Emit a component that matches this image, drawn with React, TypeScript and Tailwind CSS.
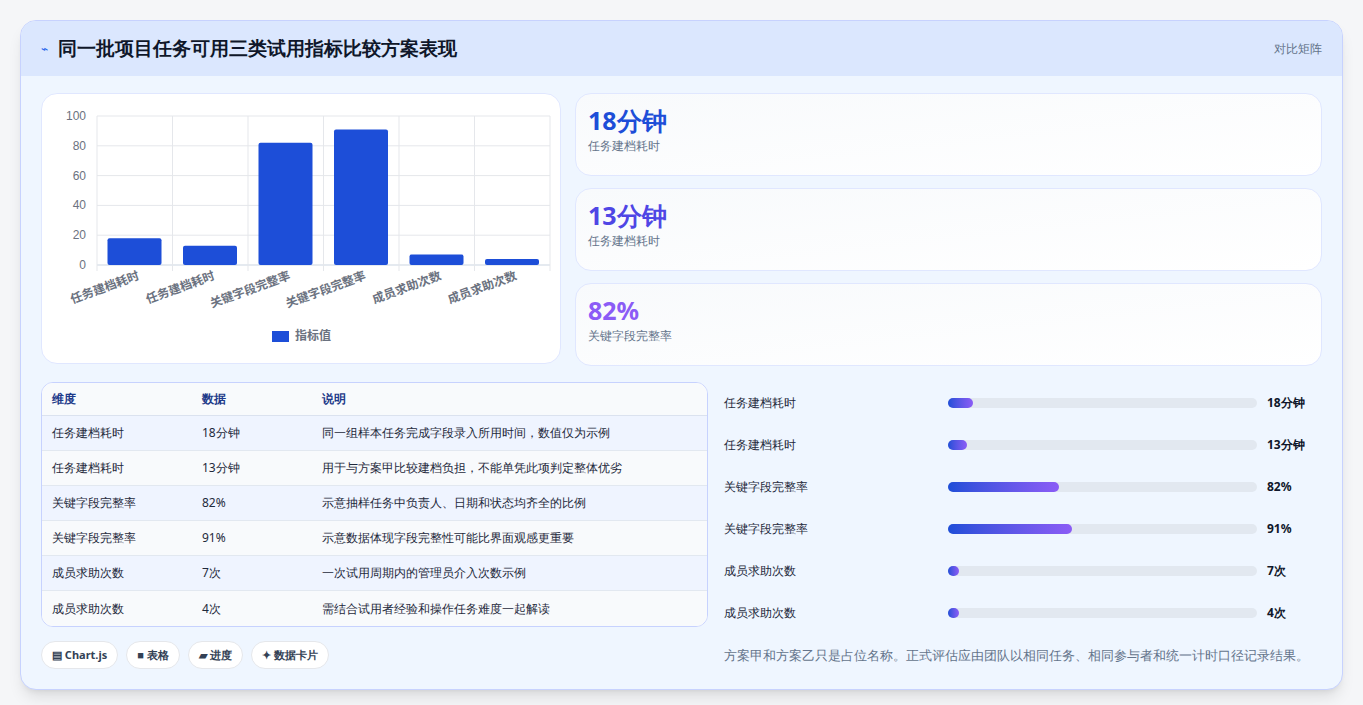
const rows = [
  { k: "任务建档耗时", v: "18分钟", n: 18, d: "同一组样本任务完成字段录入所用时间，数值仅为示例", w: "8%" },
  { k: "任务建档耗时", v: "13分钟", n: 13, d: "用于与方案甲比较建档负担，不能单凭此项判定整体优劣", w: "6%" },
  { k: "关键字段完整率", v: "82%", n: 82, d: "示意抽样任务中负责人、日期和状态均齐全的比例", w: "36%" },
  { k: "关键字段完整率", v: "91%", n: 91, d: "示意数据体现字段完整性可能比界面观感更重要", w: "40%" },
  { k: "成员求助次数", v: "7次", n: 7, d: "一次试用周期内的管理员介入次数示例", w: "3.6%" },
  { k: "成员求助次数", v: "4次", n: 4, d: "需结合试用者经验和操作任务难度一起解读", w: "3.6%" },
];

function Chart() {
  const x0 = 95, x1 = 548, y0 = 264, y1 = 115;
  const cw = (x1 - x0) / 6;
  const yOf = (v: number) => y0 - ((y0 - y1) * v) / 100;
  return (
    <svg width="520" height="270" viewBox="40 93 520 270" className="block">
      {[0, 20, 40, 60, 80, 100].map((t) => (
        <g key={t}>
          <line x1={x0} x2={x1} y1={yOf(t)} y2={yOf(t)} stroke={t === 0 ? "#cbd5e1" : "#e5e7eb"} />
          <text x={x0 - 11} y={yOf(t) + 4} textAnchor="end" fontSize="12" fill="#6b7280" fontFamily="Liberation Sans, sans-serif">{t}</text>
        </g>
      ))}
      {Array.from({ length: 7 }).map((_, i) => (
        <line key={i} x1={x0 + cw * i} x2={x0 + cw * i} y1={y1} y2={y0 + 6} stroke="#e5e7eb" />
      ))}
      {rows.map((r, i) => (
        <g key={i}>
          <rect x={x0 + cw * i + 10.5} y={yOf(r.n)} width={54} height={y0 - yOf(r.n)} rx={2} fill="#1d4ed8" />
          <text
            transform={`translate(${x0 + cw * i + 43},${y0 + 14}) rotate(-20)`}
            textAnchor="end"
            fontSize="12"
            fontWeight="600"
            fill="#6b7280"
            fontFamily="Noto Sans CJK SC, sans-serif"
          >{r.k}</text>
        </g>
      ))}
      <rect x="270" y="330" width="17" height="11" fill="#1d4ed8" />
      <text x="293" y="339" fontSize="12" fill="#6b7280" fontWeight="600" fontFamily="Noto Sans CJK SC, sans-serif">指标值</text>
    </svg>
  );
}

const cards = [
  { v: "18分钟", l: "任务建档耗时", c: "text-[#1d4ed8]" },
  { v: "13分钟", l: "任务建档耗时", c: "text-[#4f46e5]" },
  { v: "82%", l: "关键字段完整率", c: "text-[#8b5cf6]" },
];

export default function App() {
  return (
    <div className="min-h-screen bg-[#f3f4f6] px-5 pt-5 pb-5 font-['Noto_Sans_CJK_SC',sans-serif]" style={{ background: "#f5f6f8" }}>
      <div className="rounded-2xl border border-[#c7d2fe] bg-[#eff6ff] overflow-hidden shadow-lg">
        <div className="h-[55px] bg-[#dbe7fe] flex items-center justify-between px-5">
          <div className="flex items-center gap-2.5">
            <span className="text-[#2563eb] text-xs">⌁</span>
            <h1 className="text-[19px] font-bold text-[#0f172a]">同一批项目任务可用三类试用指标比较方案表现</h1>
          </div>
          <span className="text-xs text-[#64748b]">对比矩阵</span>
        </div>
        <div className="p-5 pt-[17px] flex flex-col gap-4">
          <div className="flex gap-3.5">
            <div className="w-[520px] h-[271px] shrink-0 bg-white rounded-2xl border border-[#e0e7ff] overflow-hidden">
              <Chart />
            </div>
            <div className="flex-1 flex flex-col gap-3">
              {cards.map((c, i) => (
                <div key={i} className="h-[83px] rounded-2xl border border-[#e0e7ff] bg-gradient-to-br from-[#f8fafc] to-white px-3 pt-2.5">
                  <div className={`text-[25px] font-bold leading-[32px] ${c.c}`}>{c.v}</div>
                  <div className="text-xs text-[#64748b] mt-0.5">{c.l}</div>
                </div>
              ))}
            </div>
          </div>
          <div className="flex gap-3">
            <div className="w-[667px] shrink-0">
              <div className="rounded-xl border border-[#c7d2fe] bg-white overflow-hidden text-xs">
                <div className="flex h-[33px] items-center bg-[#f8fafc] border-b border-[#dbe2ef] font-bold text-[#1e3a8a]">
                  <div className="w-[160px] pl-2.5">维度</div>
                  <div className="w-[120px]">数据</div>
                  <div>说明</div>
                </div>
                {rows.map((r, i) => (
                  <div key={i} className={`flex h-[35px] items-center text-[#1e293b] ${i < 5 ? "border-b border-[#e2e8f0]" : ""} ${i % 2 === 0 ? "bg-[#eff4ff]" : "bg-[#f8fafc]"}`}>
                    <div className="w-[160px] pl-2.5">{r.k}</div>
                    <div className="w-[120px]">{r.v}</div>
                    <div>{r.d}</div>
                  </div>
                ))}
              </div>
              <div className="flex gap-2 mt-3.5 text-[11px] font-bold text-[#334155]">
                {["▤ Chart.js", "■ 表格", "▰ 进度", "✦ 数据卡片"].map((t) => (
                  <span key={t} className="h-[28px] px-2.5 rounded-full bg-white border border-[#e5e7eb] flex items-center">{t}</span>
                ))}
              </div>
            </div>
            <div className="flex-1 pl-1">
              {rows.map((r, i) => (
                <div key={i} className="h-[42px] flex items-center text-xs">
                  <div className="w-[224px] text-[#1e293b]">{r.k}</div>
                  <div className="w-[309px] h-[10px] rounded-full bg-[#e2e8f0]">
                    <div className="h-full rounded-full bg-gradient-to-r from-[#1d4ed8] to-[#8b5cf6]" style={{ width: r.w }} />
                  </div>
                  <div className="ml-2.5 font-bold text-[#0f172a]">{r.v}</div>
                </div>
              ))}
              <p className="mt-3 text-[13px] text-[#64748b]">方案甲和方案乙只是占位名称。正式评估应由团队以相同任务、相同参与者和统一计时口径记录结果。</p>
            </div>
          </div>
        </div>
      </div>
    </div>
  );
}
